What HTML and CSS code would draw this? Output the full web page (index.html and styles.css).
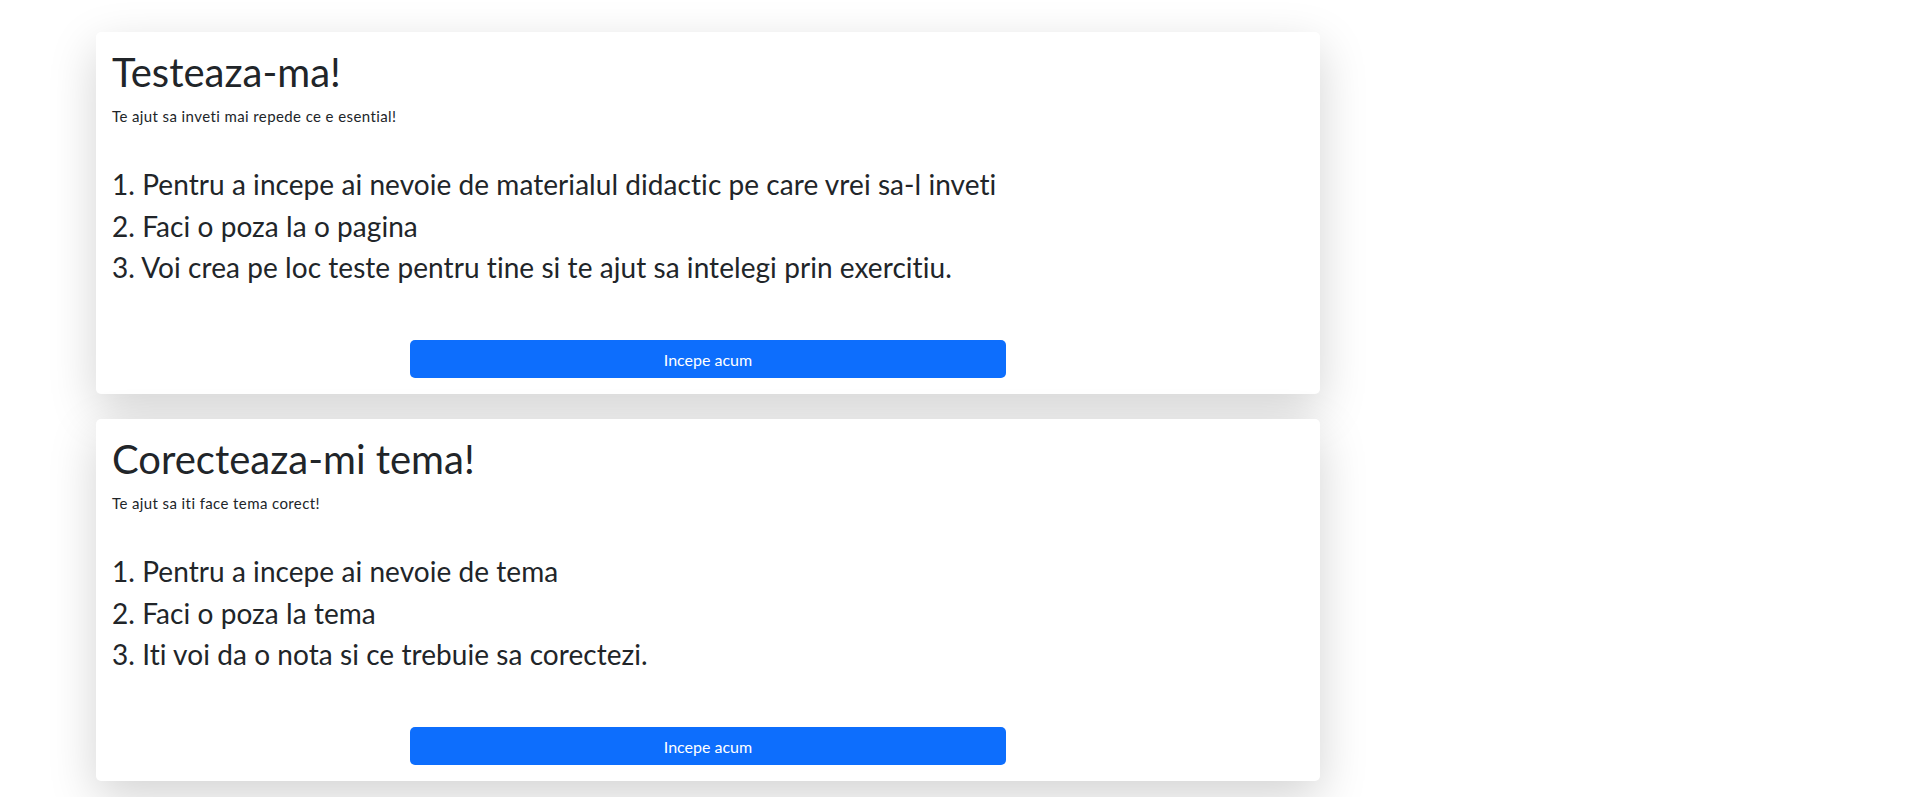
FILE: index.html
```html
<!DOCTYPE html>
<html lang="ro">
<head>
<meta charset="utf-8">
<title>Testeaza-ma</title>
<link rel="stylesheet" href="styles.css">
</head>
<body>
<main class="page">
  <section class="card">
    <h1 class="card-title">Testeaza-ma!</h1>
    <p class="card-sub">Te ajut sa inveti mai repede ce e esential!</p>
    <div class="steps">
      <h3 class="step">1. Pentru a incepe ai nevoie de materialul didactic pe care vrei sa-l inveti</h3>
      <h3 class="step">2. Faci o poza la o pagina</h3>
      <h3 class="step">3. Voi crea pe loc teste pentru tine si te ajut sa intelegi prin exercitiu.</h3>
    </div>
    <div class="actions"><button class="btn">Incepe acum</button></div>
  </section>
  <section class="card">
    <h1 class="card-title">Corecteaza-mi tema!</h1>
    <p class="card-sub">Te ajut sa iti face tema corect!</p>
    <div class="steps">
      <h3 class="step">1. Pentru a incepe ai nevoie de tema</h3>
      <h3 class="step">2. Faci o poza la tema</h3>
      <h3 class="step">3. Iti voi da o nota si ce trebuie sa corectezi.</h3>
    </div>
    <div class="actions"><button class="btn">Incepe acum</button></div>
  </section>
</main>
</body>
</html>
```
FILE: styles.css
```css
* { box-sizing: border-box; }
html, body { margin: 0; padding: 0; background: #fff; }
body {
  font-family: "Segoe UI", Lato, "Liberation Sans", sans-serif;
  font-variant-ligatures: none;
  font-feature-settings: "liga" 0, "clig" 0;
  color: #212529;
  font-size: 16px;
  line-height: 1.5;
}
.page {
  padding: 32px 0 24px 96px;
  display: flex;
  flex-direction: column;
  gap: 25px;
}
.card {
  width: 1224px;
  height: 362px;
  background: #fff;
  border-radius: 5px;
  box-shadow: 0 16px 48px rgba(0, 0, 0, 0.175);
  padding: 16px;
  display: flex;
  flex-direction: column;
}
.card-title {
  margin: 0 0 8px;
  font-size: 40px;
  font-weight: 400;
  line-height: 1.2;
}
.card-sub {
  margin: 0 0 40px;
  font-size: 15px;
  letter-spacing: 0.4px;
  line-height: 24px;
}
.steps { display: flex; flex-direction: column; gap: 8px; }
.step {
  margin: 0;
  font-size: 28px;
  font-weight: 400;
  line-height: 1.2;
  letter-spacing: 0.06px;
}
.actions {
  margin-top: auto;
  display: flex;
  justify-content: center;
}
.btn {
  width: 50%;
  height: 38px;
  border: 0;
  border-radius: 5px;
  background: #0d6efd;
  color: #fff;
  font-family: inherit;
  font-size: 16px;
}
```
